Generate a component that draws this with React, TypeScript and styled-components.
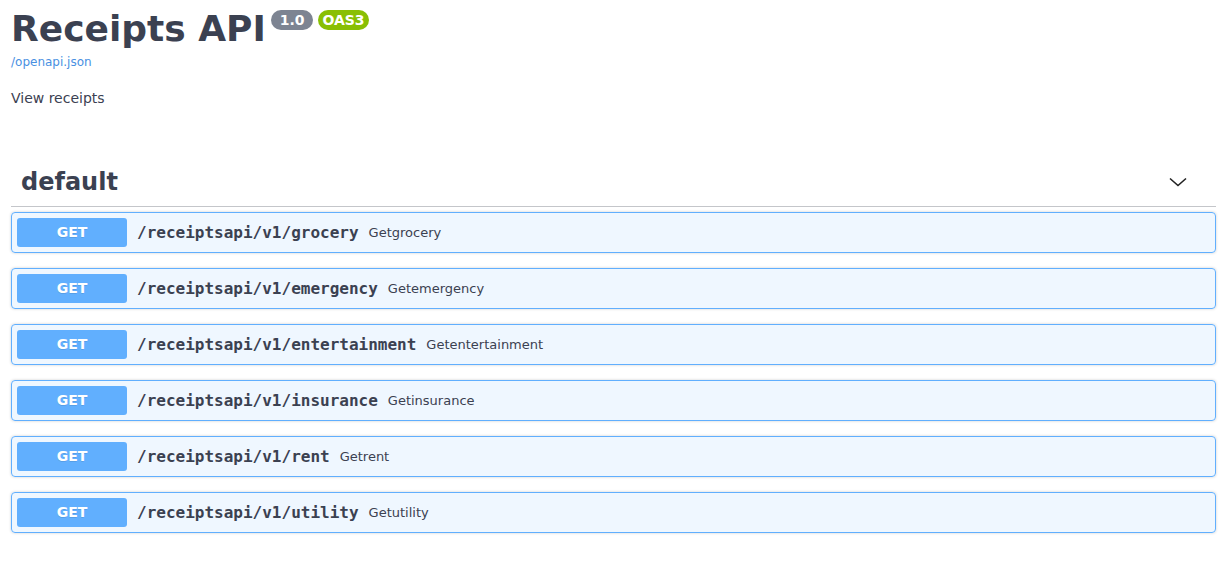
import React from "react";
import styled, { createGlobalStyle } from "styled-components";

const GlobalStyle = createGlobalStyle`
  html, body { margin: 0; padding: 0; background: #fff; }
  body { font-family: "DejaVu Sans", sans-serif; color: #3b4151; }
`;

const Page = styled.div`
  padding: 0 15px 0 11px;
  width: 1205px;
`;

const Info = styled.div`
  margin: 0;
`;

const Title = styled.h2`
  margin: 0;
  font-size: 36px;
  font-weight: bold;
  line-height: 58px;
  color: #3b4151;
  font-family: "DejaVu Sans", sans-serif;
  display: flex;
  align-items: flex-start;
`;

const Badge = styled.small<{ $bg: string }>`
  display: inline-block;
  margin: 10px 0 0 5px;
  padding: 2px 4px;
  height: 16px;
  line-height: 16px;
  border-radius: 57px;
  background: ${(p) => p.$bg};
  color: #fff;
  font-size: 14px;
  font-weight: bold;
  white-space: pre;
  font-family: "DejaVu Sans", sans-serif;
`;

const SpecLink = styled.a`
  display: block;
  font-size: 12px;
  color: #4990e2;
  text-decoration: none;
  margin-top: -3px;
  line-height: 15px;
`;

const Description = styled.p`
  margin: 19px 0 0;
  font-size: 14px;
  line-height: 18px;
`;

const Section = styled.div`
  margin-top: 50px;
`;

const TagHeading = styled.div`
  display: flex;
  align-items: center;
  justify-content: space-between;
  padding: 10px 28px 9px 10px;
  border-bottom: 1px solid rgba(59, 65, 81, 0.3);
  margin-bottom: 5px;
`;

const TagName = styled.h3`
  margin: 0;
  font-size: 24px;
  line-height: 30px;
  font-weight: bold;
  font-family: "DejaVu Sans", sans-serif;
  color: #3b4151;
`;

const Chevron = styled.svg`
  width: 20px;
  height: 20px;
  display: block;
`;

const Op = styled.div`
  display: flex;
  align-items: center;
  padding: 5px;
  margin-bottom: 15px;
  border: 1px solid #61affe;
  border-radius: 4px;
  background: rgba(97, 175, 254, 0.1);
  box-shadow: 0 0 3px rgba(0, 0, 0, 0.19);
`;

const Method = styled.span`
  width: 110px;
  height: 29px;
  line-height: 29px;
  text-align: center;
  border-radius: 3px;
  background: #61affe;
  color: #fff;
  font-size: 14px;
  font-weight: bold;
  text-shadow: 0 1px 0 rgba(0, 0, 0, 0.1);
  font-family: "DejaVu Sans", sans-serif;
`;

const Path = styled.span`
  padding: 0 10px;
  font-family: "DejaVu Sans Mono", monospace;
  font-size: 16px;
  font-weight: bold;
  color: #3b4151;
`;

const Summary = styled.span`
  font-size: 13px;
  color: #3b4151;
`;

const ops = [
  ["/receiptsapi/v1/grocery", "Getgrocery"],
  ["/receiptsapi/v1/emergency", "Getemergency"],
  ["/receiptsapi/v1/entertainment", "Getentertainment"],
  ["/receiptsapi/v1/insurance", "Getinsurance"],
  ["/receiptsapi/v1/rent", "Getrent"],
  ["/receiptsapi/v1/utility", "Getutility"],
];

export default function App() {
  return (
    <>
      <GlobalStyle />
      <Page>
        <Info>
          <Title>
            Receipts API
            <Badge $bg="#7d8492">{" 1.0 "}</Badge>
            <Badge $bg="#89bf04">OAS3</Badge>
          </Title>
          <SpecLink href="#">/openapi.json</SpecLink>
          <Description>View receipts</Description>
        </Info>
        <Section>
          <TagHeading>
            <TagName>default</TagName>
            <Chevron viewBox="0 0 20 20">
              <path d="M2 6.5 L10 13.5 L18 6.5" fill="none" stroke="#222" strokeWidth="1.6" />
            </Chevron>
          </TagHeading>
          {ops.map(([p, s]) => (
            <Op key={p}>
              <Method>GET</Method>
              <Path>{p}</Path>
              <Summary>{s}</Summary>
            </Op>
          ))}
        </Section>
      </Page>
    </>
  );
}
